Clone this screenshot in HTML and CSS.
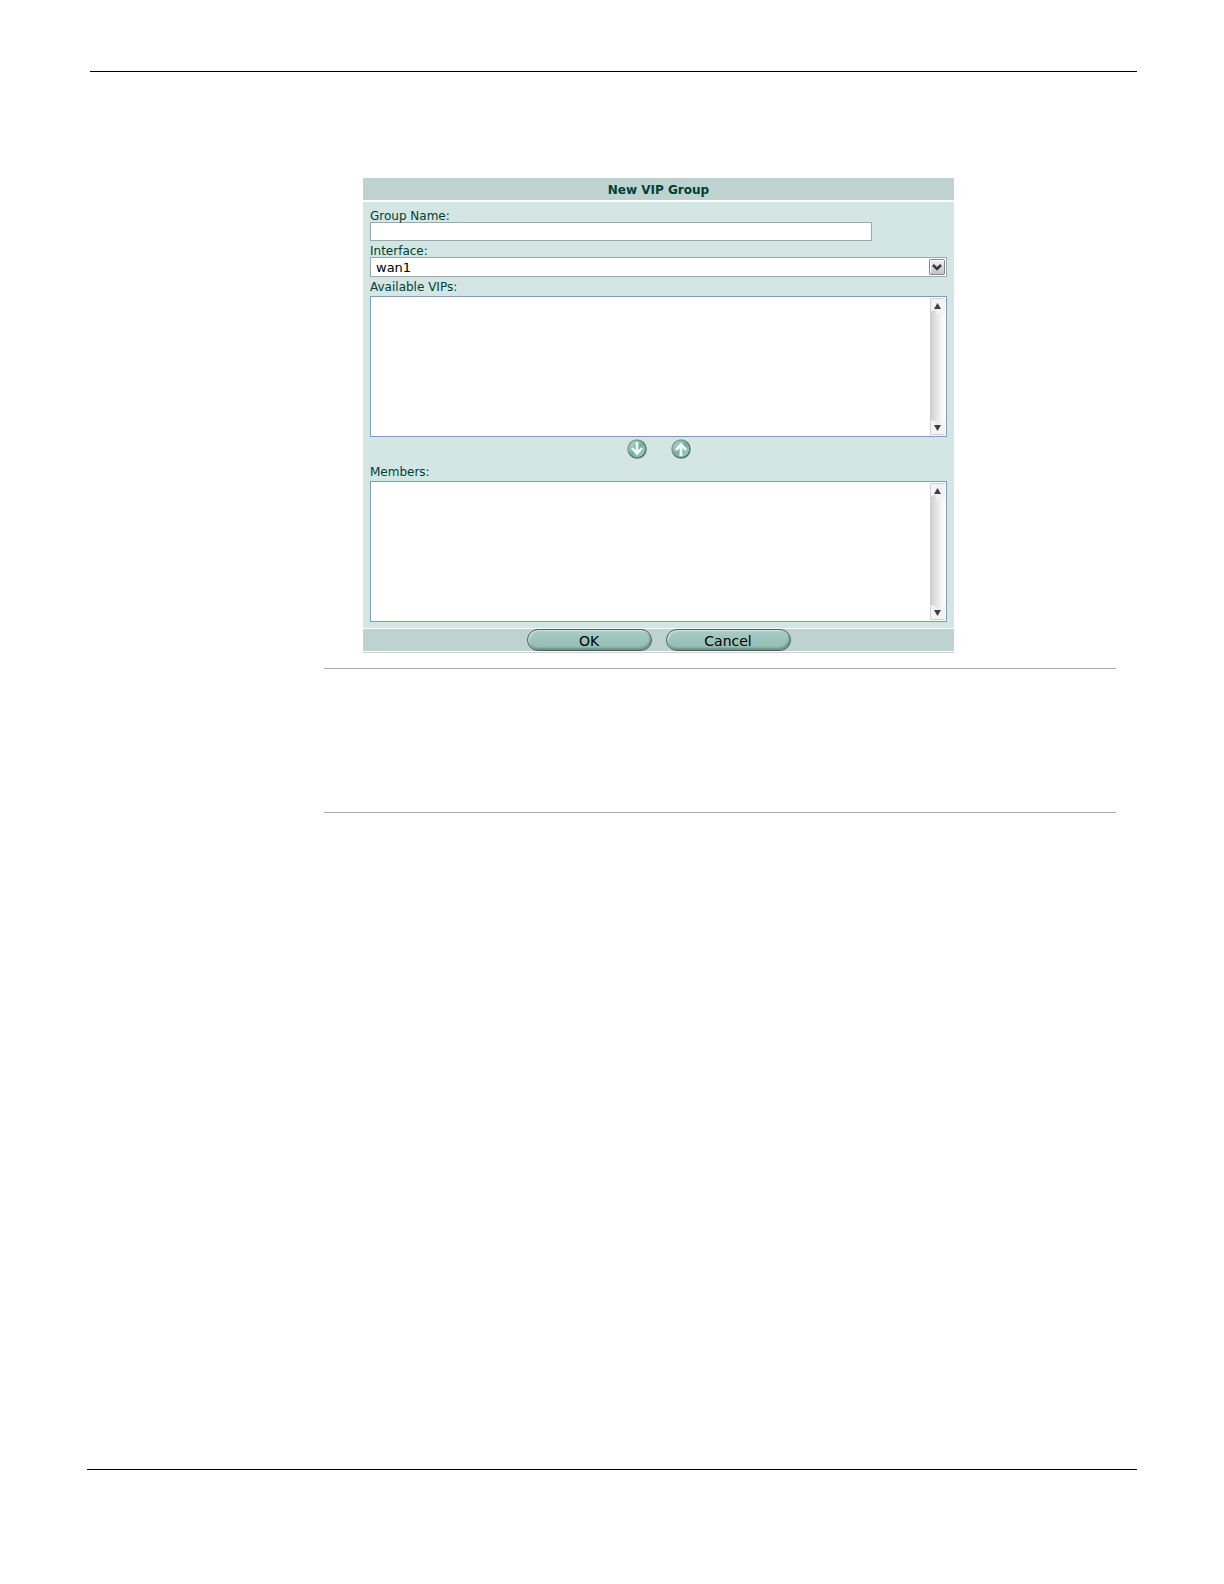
FILE: index.html
```html
<!DOCTYPE html>
<html lang="en">
<head>
<meta charset="UTF-8" />
<meta name="viewport" content="width=device-width, initial-scale=1" />
<title>New VIP Group</title>
<link rel="stylesheet" href="styles.css">
</head>
<body>

<header class="page-header"></header>

<main class="content">
  <form class="panel">
    <h1 class="panel-title">New VIP Group</h1>

    <div class="panel-body">
      <label for="groupName">Group Name:</label>
      <input type="text" id="groupName" name="groupName" class="group-name" />

      <label for="interface">Interface:</label>
      <div class="select-wrap">
        <select id="interface" name="interface">
          <option>wan1</option>
        </select>
        <svg class="select-arrow" width="16" height="16" viewBox="0 0 16 16" aria-hidden="true">
          <defs>
            <linearGradient id="arrowBg" x1="0" y1="0" x2="0" y2="1">
              <stop offset="0" stop-color="#f4f4f7" />
              <stop offset="1" stop-color="#c0c0c9" />
            </linearGradient>
          </defs>
          <rect x="0.5" y="0.5" width="15" height="15" rx="1" fill="url(#arrowBg)" stroke="#85858f" />
          <path d="M1.5 14V1.5H14" fill="none" stroke="#fff" />
          <path d="M4 6l4 4 4-4" fill="none" stroke="#3a3a40" stroke-width="2.6" />
        </svg>
      </div>

      <label for="available" class="list-label">Available VIPs:</label>
      <div class="list-box">
        <select id="available" name="available" size="8" multiple></select>
        <div class="scrollbar">
          <svg width="15" height="16" viewBox="0 0 15 16" aria-hidden="true">
            <path d="M0 0h15v16H6Q9 8 0 15z" fill="#f3f3f4" />
            <path d="M.5 15V.5h14" fill="none" stroke="#cfd3d3" />
            <path d="M7.500 5L11 11H4z" fill="#3f3f43" />
          </svg>
          <svg width="15" height="16" viewBox="0 0 15 16" aria-hidden="true">
            <path d="M0 1Q8 1 7 7L15 0v16H0z" fill="#f3f3f4" />
            <path d="M.5 1v14.500h14" fill="none" stroke="#cfd3d3" />
            <path d="M4 6h7L7.500 12z" fill="#3f3f43" />
          </svg>
        </div>
      </div>

      <div class="move-buttons">
        <button type="button" class="round" aria-label="Add to members">
          <svg width="20" height="20" viewBox="0 0 20 20" aria-hidden="true">
            <defs>
              <linearGradient id="ball" x1="0" y1="0" x2="1" y2="1">
                <stop offset="0" stop-color="#c3e3da" />
                <stop offset="0.500" stop-color="#74b09f" />
                <stop offset="1" stop-color="#b5dacf" />
              </linearGradient>
              <linearGradient id="rim" x1="0" y1="0" x2="1" y2="1">
                <stop offset="0" stop-color="#8fa9a4" />
                <stop offset="1" stop-color="#48645e" />
              </linearGradient>
            </defs>
            <circle cx="10" cy="10" r="9" fill="url(#ball)" stroke="url(#rim)" stroke-width="1.500" />
            <path d="M10 3v11M5 9l5 5.500L15 9" fill="none" stroke="#eefaf6" stroke-width="2.600" />
          </svg>
        </button>
        <button type="button" class="round" aria-label="Remove from members">
          <svg width="20" height="20" viewBox="0 0 20 20" aria-hidden="true">
            <circle cx="10" cy="10" r="9" fill="url(#ball)" stroke="url(#rim)" stroke-width="1.500" />
            <path d="M10 17V6M5 11l5-5.500 5 5.500" fill="none" stroke="#eefaf6" stroke-width="2.800" />
          </svg>
        </button>
      </div>

      <label for="members" class="list-label">Members:</label>
      <div class="list-box">
        <select id="members" name="members" size="8" multiple></select>
        <div class="scrollbar">
          <svg width="15" height="16" viewBox="0 0 15 16" aria-hidden="true">
            <path d="M0 0h15v16H6Q9 8 0 15z" fill="#f3f3f4" />
            <path d="M.5 15V.5h14" fill="none" stroke="#cfd3d3" />
            <path d="M7.500 5L11 11H4z" fill="#3f3f43" />
          </svg>
          <svg width="15" height="16" viewBox="0 0 15 16" aria-hidden="true">
            <path d="M0 1Q8 1 7 7L15 0v16H0z" fill="#f3f3f4" />
            <path d="M.5 1v14.500h14" fill="none" stroke="#cfd3d3" />
            <path d="M4 6h7L7.500 12z" fill="#3f3f43" />
          </svg>
        </div>
      </div>
    </div>

    <div class="panel-footer">
      <button type="button" class="pill">OK</button>
      <button type="button" class="pill">Cancel</button>
    </div>
  </form>

  <section class="notes"></section>
</main>

<footer class="page-footer"></footer>

</body>
</html>
```

FILE: styles.css
```css
* {
  box-sizing: border-box;
}
body {
  margin: 0;
  min-height: 100vh;
  padding: 71px 87px 114px;
  display: flex;
  flex-direction: column;
  background: #fff;
  font-family: Verdana, "DejaVu Sans", sans-serif;
  font-size: 12px;
  color: #003f33;
}
.page-header {
  margin-left: 3px;
  border-top: 1px solid #000;
}
.page-footer {
  border-top: 1px solid #000;
}
.content {
  flex: 1;
  padding: 106px 21px 0 237px;
}
.panel {
  max-width: 591px;
  margin: 0 0 15px 39px;
  border-bottom: 1px solid #c9d3d3;
}
.panel-title {
  height: 22px;
  margin: 0 0 2px;
  font-size: 12px;
  line-height: 24px;
  text-align: center;
  background: #bed2d0;
}
.panel-body {
  padding: 6px 7px;
  background: #d3e6e3;
}
.panel-body label {
  display: block;
  height: 14px;
  line-height: 16px;
}
.panel-body .list-label {
  height: 17px;
}
.group-name {
  display: block;
  width: 87%;
  height: 19px;
  margin-bottom: 2px;
  padding: 0 4px;
  border: 1px solid #9aa9ad;
  background: #fff;
  font: inherit;
}
.select-wrap {
  position: relative;
  margin-bottom: 2px;
}
.select-wrap select {
  display: block;
  width: 100%;
  height: 20px;
  padding: 1px 20px 0 5px;
  appearance: none;
  border: 1px solid #9aa9ad;
  border-radius: 0;
  background: #fff;
  font: inherit;
  font-size: 13px;
  color: #000;
}
.select-arrow {
  position: absolute;
  top: 2px;
  right: 2px;
}
.list-box {
  display: flex;
  height: 141px;
  padding: 1px;
  border: 1px solid #7f9db9;
  background: #fff;
}
.list-box select {
  flex: 1;
  border: none;
  outline: none;
  background: #fff;
}
.scrollbar {
  display: flex;
  flex-direction: column;
  justify-content: space-between;
  width: 15px;
  background: linear-gradient(90deg, #cdcdcf, #f2f2f3 70%, #fff);
}
.scrollbar svg {
  display: block;
}
.move-buttons {
  display: flex;
  justify-content: center;
  gap: 24px;
  padding: 2px 0 5px;
}
.round {
  height: 20px;
  padding: 0;
  border: none;
  background: none;
  cursor: pointer;
}
.round svg {
  display: block;
}
.panel-footer {
  display: flex;
  justify-content: center;
  gap: 14px;
  margin: 1px 0;
  background: #bed2d0;
}
.pill {
  width: 125px;
  height: 22px;
  padding: 2px 0 0;
  border: 1px solid #47655e;
  border-radius: 11px;
  background: linear-gradient(#a8cdc4, #92bbb1);
  box-shadow: inset 1px 1px 1px #d2e7e1, inset -1px -2px 2px #6d8f87;
  font-family: inherit;
  font-size: 14px;
  line-height: 18px;
  color: #000;
  cursor: pointer;
}
.notes {
  min-height: 145px;
  border-top: 1px solid #a9a9a9;
  border-bottom: 1px solid #a9a9a9;
}
```
